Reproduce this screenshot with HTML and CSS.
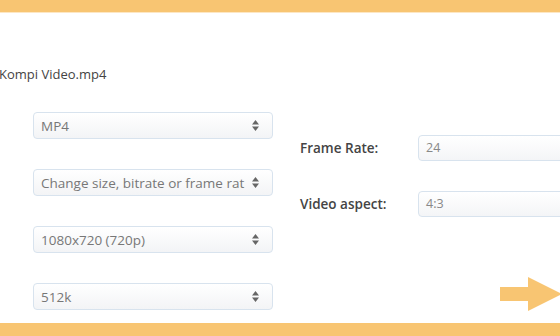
FILE: index.html
```html
<!DOCTYPE html>
<html lang="en">
<head>
  <meta charset="UTF-8" />
  <title>Convert Video</title>
  <link rel="stylesheet" href="styles.css">
</head>
<body>
  <div class="top-bar"></div>

  <div class="page">
    <p class="file-name">Kompi Video.mp4</p>

    <div class="convert-form">
      <!-- Format options -->
      <div class="select-column">
        <div class="select-box">
          <span>MP4</span>
          <svg class="updown" width="7" height="11" viewBox="0 0 7 11"><path d="M3.5 0L7 4.5H0Z M3.5 11L0 6.5H7Z" fill="#666"/></svg>
        </div>
        <div class="select-box">
          <span>Change size, bitrate or frame rat</span>
          <svg class="updown" width="7" height="11" viewBox="0 0 7 11"><path d="M3.5 0L7 4.5H0Z M3.5 11L0 6.5H7Z" fill="#666"/></svg>
        </div>
        <div class="select-box">
          <span>1080x720 (720p)</span>
          <svg class="updown" width="7" height="11" viewBox="0 0 7 11"><path d="M3.5 0L7 4.5H0Z M3.5 11L0 6.5H7Z" fill="#666"/></svg>
        </div>
        <div class="select-box">
          <span>512k</span>
          <svg class="updown" width="7" height="11" viewBox="0 0 7 11"><path d="M3.5 0L7 4.5H0Z M3.5 11L0 6.5H7Z" fill="#666"/></svg>
        </div>
      </div>

      <!-- Frame settings -->
      <div class="field-column">
        <div class="field-row">
          <label>Frame Rate:</label>
          <div class="text-input">24</div>
        </div>
        <div class="field-row">
          <label>Video aspect:</label>
          <div class="text-input">4:3</div>
        </div>
        <div class="next-arrow">
          <svg width="62" height="34" viewBox="0 0 62 34"><path d="M0 10H28V0L62 17L28 34V24H0Z" fill="#f8c572"/></svg>
        </div>
      </div>
    </div>
  </div>

  <div class="bottom-bar"></div>
</body>
</html>
```

FILE: styles.css
```css
html, body {
  margin: 0;
  height: 100%;
  overflow: hidden;
}

body {
  font-family: 'Open Sans', sans-serif;
  background-color: #fff;
  display: flex;
  flex-direction: column;
}

.top-bar {
  height: 12px;
  background-color: #f8c572;
  border-bottom: 1px solid #fde7c4;
}

.bottom-bar {
  height: 13px;
  background-color: #f8c572;
}

.page {
  flex: 1;
}

.file-name {
  margin: 52px 0 0 -1px;
  font-size: 13px;
  color: #444;
}

.convert-form {
  display: flex;
  margin-top: 29px;
}

.select-column {
  display: flex;
  flex-direction: column;
  gap: 30px;
  margin-left: 33px;
  width: 240px;
  flex-shrink: 0;
}

.select-box {
  display: flex;
  align-items: center;
  height: 25px;
  padding: 0 13px 0 7px;
  border: 1px solid #d8e3ee;
  border-radius: 4px;
  background: linear-gradient(#fff, #f3f4f6);
  font-size: 13.5px;
  color: #777;
}

.select-box span {
  flex: 1;
  min-width: 0;
  overflow: hidden;
  white-space: nowrap;
}

.updown {
  margin-left: 6px;
  flex-shrink: 0;
}

.field-column {
  width: 260px;
  flex-shrink: 0;
  display: flex;
  flex-direction: column;
  margin-left: 27px;
  padding-top: 23px;
  gap: 30px;
}

.field-row {
  display: flex;
  align-items: center;
}

.field-row label {
  width: 118px;
  flex-shrink: 0;
  font-size: 13.5px;
  font-weight: 600;
  color: #444;
}

.text-input {
  width: 180px;
  flex-shrink: 0;
  height: 24px;
  line-height: 24px;
  padding-left: 7px;
  border: 1px solid #d8e3ee;
  border-radius: 4px;
  background: linear-gradient(#fff, #f4f5f7);
  font-size: 12.5px;
  color: #888;
}

.next-arrow {
  margin-top: 30px;
  align-self: flex-end;
  margin-right: -2px;
  height: 34px;
}
```
